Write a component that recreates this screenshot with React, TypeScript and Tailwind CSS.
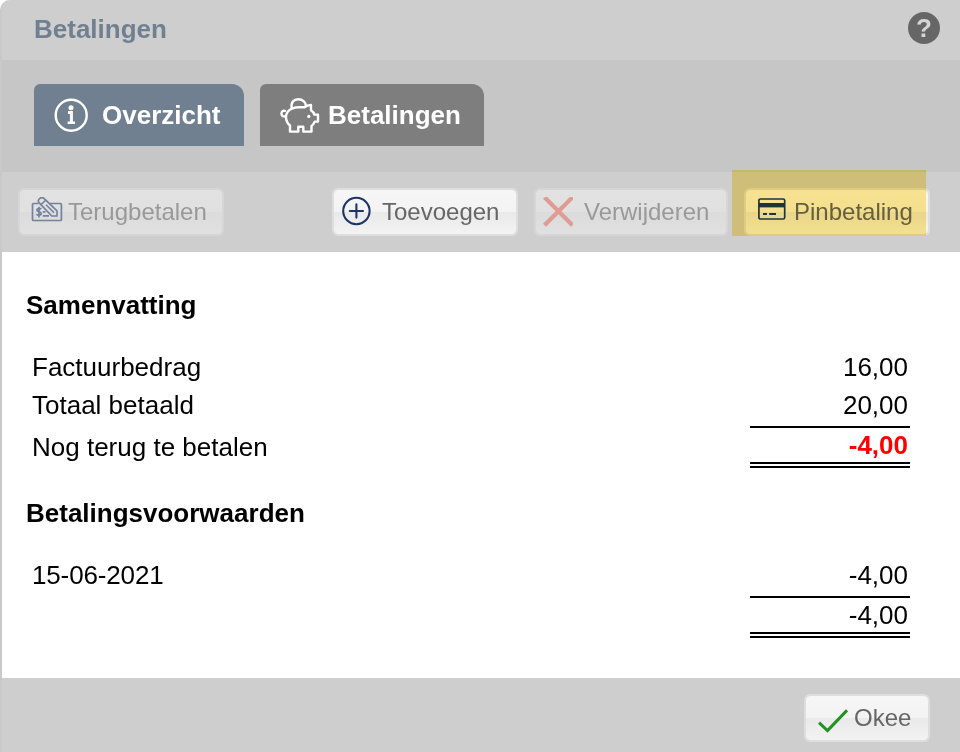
import type { ReactNode } from "react";

function InfoIcon() {
  return (
    <svg className="h-[34px] w-[34px] shrink-0" viewBox="0 0 34 34" fill="none" stroke="#fff">
      <circle cx="17.2" cy="17.2" r="15.5" strokeWidth="2.4" />
      <circle cx="17" cy="9.8" r="2.5" fill="#fff" stroke="none" />
      <path d="M14 14.4h3.4v9.8" strokeWidth="3" />
      <path d="M13.6 24.7h7.4" strokeWidth="2.5" />
    </svg>
  );
}

function PiggyIcon() {
  return (
    <svg className="h-9 w-10 shrink-0" viewBox="0 0 40 36" fill="none" stroke="#fff" strokeWidth="2.4" strokeLinejoin="round" strokeLinecap="round">
      <path d="M11.7 11C10.7 5 14 2.3 18.2 2.3S26 5 25.8 9" />
      <path d="M12.5 11.4C14.8 10.4 17 10.2 19 10.2H24.8C26.3 8.6 28.5 8 31 8V13.2C33 14.6 34 16 34.4 17.6H38V24.6H34.7C33.8 26.7 32.8 28 31.5 29V34.6H23.3V29.8H18.3V34.6H10V28.5C7.5 26.6 6 24 6 20.3C6 16 8.5 13 12.5 11.4Z" />
      <path d="M5 13.8C3 13.3 1.4 14.5 1.4 16.6S3 20 5.8 19.4" />
      <circle cx="28.8" cy="19.4" r="1.6" fill="#fff" stroke="none" />
    </svg>
  );
}

function ChequeIcon() {
  return (
    <svg className="h-[26px] w-8 shrink-0" viewBox="0 0 32 26" fill="none" stroke="#1d3870" strokeWidth="1.7" strokeLinejoin="round">
      <path d="M7.6 6.5H2.5C1.9 6.5 1.5 6.9 1.5 7.5V22.5C1.5 23.1 1.9 23.5 2.5 23.5H29.4C30 23.5 30.4 23.1 30.4 22.5V7.5C30.4 6.9 30 6.5 29.4 6.5H19" />
      <path d="M8.2 5.8C6.8 4.4 7.2 2.8 8.6 1.6S11.8 .2 13.2 1.6L26 13.8V19H20.8Z" />
      <path d="M10.2 7.4L14.6 3.2M15 7.8L23 15.6" strokeWidth="1.5" />
      <path d="M10.2 12.3C9.3 11.1 5.8 11.1 5.8 13.1C5.8 15.1 10.2 14.2 10.2 16.6C10.2 18.8 6.4 18.6 5.5 17.3M8 9.8V20.4M11.8 18.8H18M11.8 14.8H14.5" />
    </svg>
  );
}

function PlusCircleIcon() {
  return (
    <svg className="h-[30px] w-[30px] shrink-0" viewBox="0 0 30 30" fill="none" stroke="#1d3468" strokeWidth="2.1" strokeLinecap="round">
      <circle cx="15.4" cy="15" r="13.2" />
      <path d="M8.8 15H22M15.4 8.4V21.6" />
    </svg>
  );
}

function CrossIcon() {
  return (
    <svg className="h-[30px] w-[30px] shrink-0" viewBox="0 0 30 30" fill="none" stroke="#f0695c" strokeWidth="4.2">
      <path d="M3 1.8L28 26.8M28 1.8L3 26.8" strokeLinecap="square" strokeLinejoin="round" />
    </svg>
  );
}

function CardIcon() {
  return (
    <svg className="h-[22px] w-7 shrink-0" viewBox="0 0 28 22" fill="none" stroke="#1f3862" strokeWidth="1.7">
      <rect x=".9" y="1" width="25.8" height="20" rx="1.6" />
      <path d="M1 7.2H27" strokeWidth="4.4" />
      <path d="M5 16H9M11.2 16H18" strokeWidth="1.8" />
    </svg>
  );
}

function CheckIcon() {
  return (
    <svg className="h-6 w-[30px] shrink-0" viewBox="0 0 30 24" fill="none" stroke="#229122" strokeWidth="3">
      <path d="M1 13.7L9.5 21.6L29 1.3" />
    </svg>
  );
}

function ToolButton({ className, disabled, children }: { className: string; disabled?: boolean; children: ReactNode }) {
  return (
    <button
      disabled={disabled}
      className={`flex h-12 shrink-0 items-center rounded-[6px] border-2 border-[#dedede] bg-[linear-gradient(#f6f6f6_0%,#f3f3f3_50%,#e9e9e9_50%,#f3f3f3_100%)] bg-clip-padding text-2xl leading-7 whitespace-nowrap text-[#666] ${disabled ? "opacity-50" : ""} ${className}`}
    >
      {children}
    </button>
  );
}

export default function App() {
  return (
    <div className="h-[752px] w-[960px] overflow-hidden bg-white font-['Liberation_Sans',Arial,sans-serif] text-[26px] leading-[30px] text-black">
      <div className="flex h-full flex-col overflow-hidden rounded-tl-[10px] border-l-2 border-[#c9c9c9] bg-[#cecece]">
        <header className="flex h-[60px] shrink-0 items-center justify-between pr-5 pb-1 pl-8">
          <h1 className="pt-0.5 font-bold text-[#708090]">Betalingen</h1>
          <span className="flex h-8 w-8 items-center justify-center rounded-full bg-[#666] text-[26px] leading-8 font-bold text-[#d5d5d5]">?</span>
        </header>

        <nav className="flex h-28 shrink-0 gap-4 bg-[#c6c6c6] pt-6 pl-8 font-bold text-white">
          <div className="flex h-[62px] w-[210px] items-center gap-[14px] rounded-tl-[6px] rounded-tr-[12px] bg-[#708090] pl-5">
            <InfoIcon />
            <span>Overzicht</span>
          </div>
          <div className="flex h-[62px] w-56 items-center gap-2 rounded-tl-[6px] rounded-tr-[12px] bg-[#7e7e7e] pl-5">
            <PiggyIcon />
            <span>Betalingen</span>
          </div>
        </nav>

        <div className="flex h-20 shrink-0 items-center pl-4">
          <ToolButton disabled className="w-[206px] pl-[11px]">
            <span className="-mt-1"><ChequeIcon /></span>
            <span className="ml-[5px]">Terugbetalen</span>
          </ToolButton>
          <ToolButton className="ml-[108px] w-[186px] pl-[7px]">
            <span className="-mt-0.5"><PlusCircleIcon /></span>
            <span className="ml-[11px]">Toevoegen</span>
          </ToolButton>
          <ToolButton disabled className="ml-4 w-[194px] pl-[7px]">
            <CrossIcon />
            <span className="ml-[11px]">Verwijderen</span>
          </ToolButton>
          <div className="relative ml-4">
            <ToolButton className="w-[186px] pl-3">
              <span className="-mt-[7px]"><CardIcon /></span>
              <span className="ml-2">Pinbetaling</span>
            </ToolButton>
            <div className="absolute -top-[18px] -left-3 h-[66px] w-[194px] bg-[#ffeb96] mix-blend-multiply" />
          </div>
        </div>

        <main className="h-[426px] shrink-0 bg-white pt-[38px] pr-[50px] pl-6">
          <h2 className="font-bold">Samenvatting</h2>
          <div className="mt-8 flex justify-between pl-1.5">
            <div>
              <p>Factuurbedrag</p>
              <p className="mt-2">Totaal betaald</p>
              <p className="mt-3">Nog terug te betalen</p>
            </div>
            <div className="w-40 text-right">
              <p className="pr-0.5">16,00</p>
              <p className="mt-2 pr-0.5">20,00</p>
              <p className="mt-1.5 h-[42px] border-t-2 border-b-[6px] border-double border-t-black border-b-black pt-0.5 pr-0.5 font-bold text-[#f00]">-4,00</p>
            </div>
          </div>
          <h2 className="mt-[30px] font-bold">Betalingsvoorwaarden</h2>
          <div className="mt-8 flex justify-between pl-1.5">
            <p className="tracking-[-0.15px]">15-06-2021</p>
            <div className="w-40 text-right">
              <p className="pr-0.5">-4,00</p>
              <p className="mt-1.5 h-[42px] border-t-2 border-b-[6px] border-double border-black pt-0.5 pr-0.5">-4,00</p>
            </div>
          </div>
        </main>

        <footer className="flex h-[74px] shrink-0 justify-end pt-4 pr-[30px]">
          <ToolButton className="w-[126px] pl-3">
            <span className="mt-1.5"><CheckIcon /></span>
            <span className="ml-1.5">Okee</span>
          </ToolButton>
        </footer>
      </div>
    </div>
  );
}
